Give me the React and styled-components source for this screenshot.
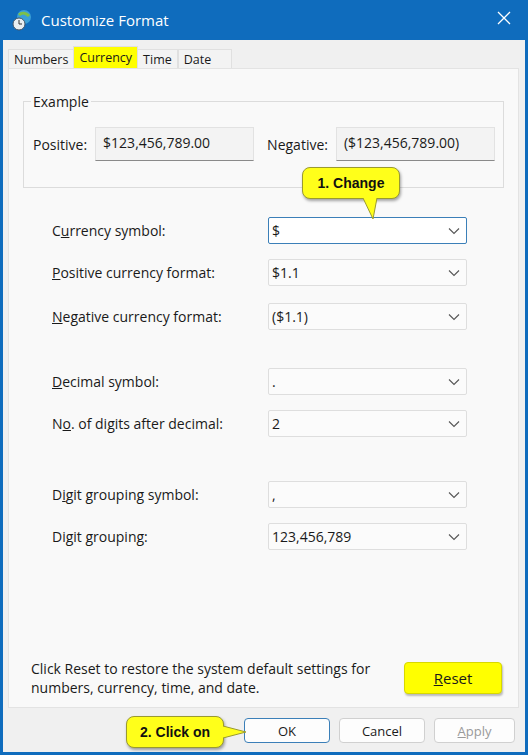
import React from "react";
import styled, { createGlobalStyle } from "styled-components";

const G = createGlobalStyle`
  html,body{margin:0;padding:0;}
  body{font-family:"Segoe UI","Open Sans","Noto Sans",sans-serif;font-size:14px;color:#1a1a1a;}
`;
const Win = styled.div`
  width:528px;height:755px;box-sizing:border-box;background:#0f6cbd;padding:0 3px 3px 3px;
  display:flex;flex-direction:column;position:relative;overflow:hidden;
`;
const Title = styled.div`
  height:40px;display:flex;align-items:center;color:#fff;font-size:15px;gap:9px;padding-left:9px;position:relative;
`;
const Close = styled.div`position:absolute;right:14px;top:9px;`;
const Client = styled.div`flex:1;background:#f0f0f0;display:flex;flex-direction:column;padding:8px 6px 0 5px;`;
const Tabs = styled.div`display:flex;height:20px;align-items:flex-end;`;
const Tab = styled.div`
  height:${p=>p.$on?22:19}px;box-sizing:border-box;padding:0 ${p=>p.$pr||5}px 0 5px;display:flex;align-items:center;font-size:12.5px;
  background:${p=>p.$on?"#ffff00":"#f3f3f3"};border:1px solid #e0e0e0;border-bottom:none;
  ${p=>p.$on?"margin:0 -1px;z-index:1;":""}
`;
const Page = styled.div`
  height:640px;background:#f9f9f9;border:1px solid #e3e3e3;box-sizing:border-box;padding:23px 15px 0 14px;
  display:flex;flex-direction:column;position:relative;
`;
const Group = styled.fieldset`
  margin:0;height:96px;box-sizing:border-box;border:1px solid #dcdcdc;padding:16px 8px 0 9px;
  display:flex;align-items:flex-start;gap:8px;
  legend{padding:0 2px;margin-left:-2px;font-size:14px;}
`;
const ExLabel = styled.span`padding-top:8px;`;
const ExBox = styled.div`
  width:${p=>p.$w}px;height:34px;box-sizing:border-box;background:#f3f3f3;border:1px solid #e2e2e2;border-bottom-color:#8a8a8a;
  padding:5px 7px;margin-right:${p=>p.$mr||0}px;
`;
const Form = styled.div`display:flex;flex-direction:column;padding:29px 0 0 29px;`;
const Row = styled.div`display:flex;align-items:center;height:27px;margin-top:${p=>p.$mt}px;`;
const Label = styled.div`width:216px;`;
const Select = styled.div`
  width:199px;height:27px;box-sizing:border-box;background:${p=>p.$focus?"#fff":"#fbfbfb"};
  border:1px solid ${p=>p.$focus?"#3b7fb8":"#dedede"};border-radius:2px;display:flex;align-items:center;justify-content:space-between;
  padding:0 6px 0 3px;
`;
const Foot = styled.div`margin-top:auto;display:flex;align-items:center;justify-content:space-between;padding:0 1px 10px 8px;`;
const Note = styled.div`font-size:14px;line-height:19px;`;
const Btn = styled.div`
  width:${p=>p.$w}px;height:${p=>p.$h||25}px;box-sizing:border-box;display:flex;align-items:center;justify-content:center;
  background:${p=>p.$y?"#ffff00":"#fdfdfd"};border:1px solid ${p=>p.$primary?"#3b7fb8":p.$y?"#d8d800":"#d0d0d0"};
  border-radius:4px;font-size:13px;color:${p=>p.$dis?"#9a9a9a":"#1a1a1a"};
  ${p=>p.$y?"font-size:15px;box-shadow:1px 2px 2px rgba(0,0,0,.25);":""}
`;
const Buttons = styled.div`display:flex;justify-content:flex-end;gap:9px;padding:10px 4px 0 0;`;
const Callout = styled.div`
  position:absolute;left:${p=>p.$x}px;top:${p=>p.$y}px;width:${p=>p.$w}px;height:32px;background:#ffff1a;
  border:1px solid #9a9a30;border-radius:8px;box-sizing:border-box;display:flex;align-items:center;justify-content:center;
  font-family:"Liberation Sans",Arial,sans-serif;font-weight:bold;font-size:14px;color:#111;box-shadow:1px 2px 3px rgba(0,0,0,.35);
`;
const Chev = () => (<svg width="12" height="8" viewBox="0 0 12 8"><path d="M1 1.5l5 5 5-5" fill="none" stroke="#555" strokeWidth="1.1"/></svg>);
const U = styled.span`text-decoration:underline;`;

const rows = [
  [<>C<U>u</U>rrency symbol:</>, "$", 0, true],
  [<><U>P</U>ositive currency format:</>, "$1.1", 15],
  [<><U>N</U>egative currency format:</>, "($1.1)", 17],
  [<><U>D</U>ecimal symbol:</>, ".", 38],
  [<>N<U>o</U>. of digits after decimal:</>, "2", 15],
  [<>D<U>i</U>git grouping symbol:</>, ",", 44],
  [<>Di<U>g</U>it grouping:</>, "123,456,789", 15],
];

export default function App(){
  return (<><G/>
  <Win>
    <Title>
      <svg width="20" height="22" viewBox="0 0 20 22"><circle cx="12" cy="8" r="7" fill="#3aa0d8"/><path d="M7 6c3-3 7-2 10 1" stroke="#7cc04a" strokeWidth="3" fill="none"/><circle cx="7" cy="15" r="6" fill="#e8eef2" stroke="#456" strokeWidth="1"/><path d="M7 11v4h3" stroke="#333" fill="none"/></svg>
      Customize Format
      <Close><svg width="14" height="14"><path d="M1 1l12 12M13 1L1 13" stroke="#fff" strokeWidth="1.3"/></svg></Close>
    </Title>
    <Client>
      <Tabs><Tab>Numbers</Tab><Tab $on>Currency</Tab><Tab>Time</Tab><Tab $pr={20}>Date</Tab></Tabs>
      <Page>
        <Group><legend>Example</legend>
          <ExLabel>Positive:</ExLabel><ExBox $w={159} $mr={5}>$123,456,789.00</ExBox>
          <ExLabel>Negative:</ExLabel><ExBox $w={159}>($123,456,789.00)</ExBox>
        </Group>
        <Form>
          {rows.map(([l,v,m,f],i)=>(<Row key={i} $mt={m}><Label>{l}</Label><Select $focus={f}><span>{v}</span><Chev/></Select></Row>))}
        </Form>
        <Foot><Note>Click Reset to restore the system default settings for<br/>numbers, currency, time, and date.</Note><Btn $y $w={98} $h={32}><U>R</U>eset</Btn></Foot>
      </Page>
      <Buttons><Btn $w={86} $primary>OK</Btn><Btn $w={86}>Cancel</Btn><Btn $w={81} $dis><U>A</U>pply</Btn></Buttons>
    </Client>
    <Callout $x={302} $y={167} $w={98}>1. Change
      <svg style={{position:"absolute",left:60,top:29}} width="16" height="24"><path d="M0 1L10 22L14 1" fill="#ffff1a" stroke="#9a9a30"/><path d="M1 0H13" stroke="#ffff1a" strokeWidth="3"/></svg>
    </Callout>
    <Callout $x={126} $y={716} $w={98}>2. Click on
      <svg style={{position:"absolute",left:95,top:8}} width="26" height="16"><path d="M1 1L24 7L1 13" fill="#ffff1a" stroke="#9a9a30"/><path d="M0 2V12" stroke="#ffff1a" strokeWidth="3"/></svg>
    </Callout>
  </Win></>);
}
